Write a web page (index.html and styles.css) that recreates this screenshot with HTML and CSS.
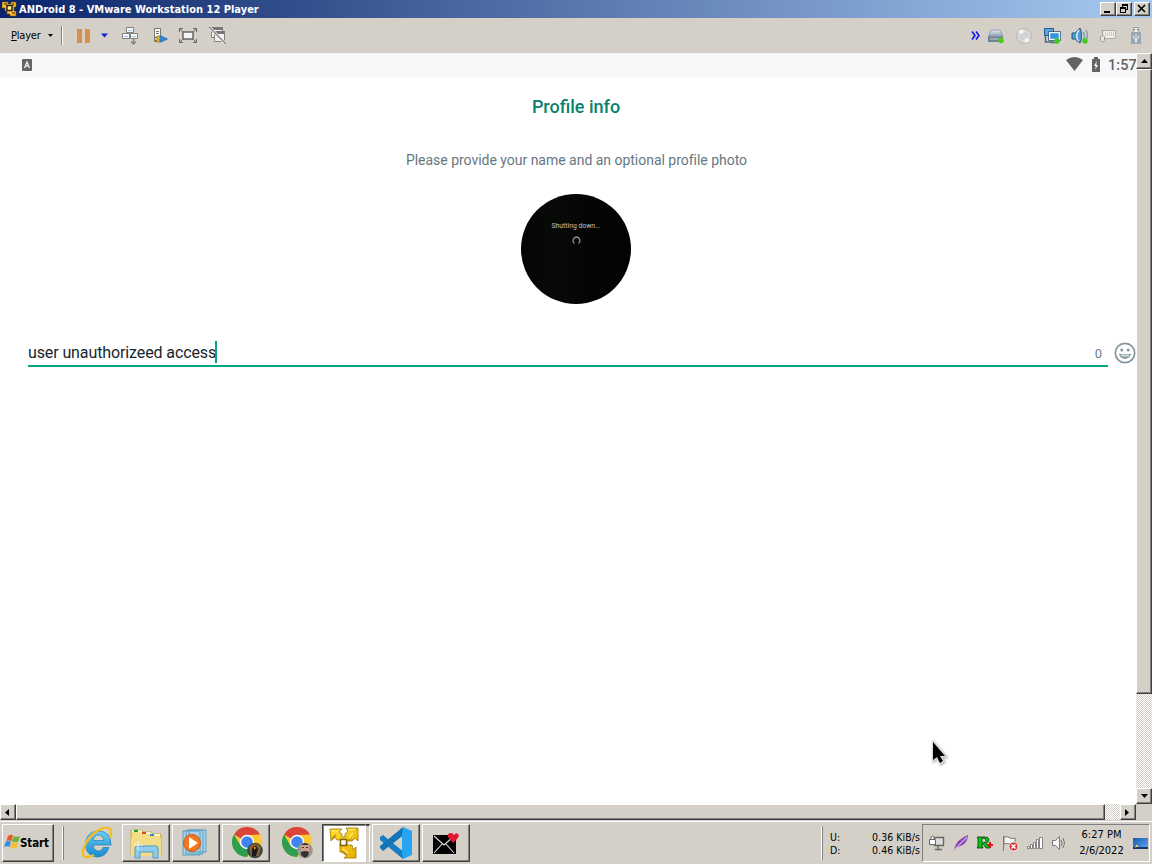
FILE: index.html
```html
<!DOCTYPE html>
<html lang="en">
<head>
<meta charset="utf-8">
<title>ANDroid 8 - VMware Workstation 12 Player</title>
<link rel="stylesheet" href="styles.css">
</head>
<body>
<svg class="defs" aria-hidden="true">
  <defs>
    <linearGradient id="gold" x1="0" y1="0" x2="1" y2="1"><stop offset="0" stop-color="#ffe030"/><stop offset="1" stop-color="#e8ad00"/></linearGradient>
    <linearGradient id="ie" x1="0" y1="0" x2="0" y2="1"><stop offset="0" stop-color="#6ccbf5"/><stop offset="1" stop-color="#168bd0"/></linearGradient>
    <linearGradient id="metal" x1="0" y1="0" x2="0" y2="1"><stop offset="0" stop-color="#e8edf1"/><stop offset="1" stop-color="#8195a5"/></linearGradient>
    <linearGradient id="screen" x1="0" y1="0" x2="1" y2="1"><stop offset="0" stop-color="#1559b5"/><stop offset="1" stop-color="#63a9ee"/></linearGradient>
    <symbol id="chrome" viewBox="0 0 30 30">
      <circle cx="15" cy="15" r="15" fill="#fcc934"/>
      <path d="M15 15 2 7.5A15 15 0 0 1 28 7.5L15 8Z" fill="#d9453a"/>
      <path d="M15 15 8.5 18.5 2 7.5A15 15 0 0 0 15 30L21.500 18.500Z" fill="#2f9e4f"/>
      <circle cx="15" cy="15" r="7.200" fill="#fff"/><circle cx="15" cy="15" r="5.800" fill="#3f83f0"/>
    </symbol>
  </defs>
</svg>
<div class="desktop">
  <header class="titlebar">
    <svg class="app-icon" width="16" height="16" viewBox="0 0 16 16"><path d="M0 1h6v2h3V1h5v5h-2v4h2v5H8v-2H5v-3H3V7H0Z" fill="#ffb92b" stroke="#7a5000" stroke-width=".6"/><path d="M5 4.500h5v5H5Z" fill="#fff0a0" stroke="#2b2412" stroke-width="1.500"/><path d="M2 3h3M11 5V2M10 12h3" stroke="#382800"/></svg>
    <span class="title">ANDroid 8 - VMware Workstation 12 Player</span>
    <div class="window-controls">
      <span class="raised control"><svg width="12" height="10"><path d="M2 7h6v2H2z"/></svg></span>
      <span class="raised control"><svg width="12" height="10"><path d="M4 0h6v6H8V5h1V2H5v1H4zM2 3h6v6H2zm1 2v3h4V5z" fill-rule="evenodd"/></svg></span>
      <span class="raised control close"><svg width="12" height="10"><path d="m2 1 7 7M9 1 2 8" stroke="#000" stroke-width="1.700"/></svg></span>
    </div>
  </header>

  <nav class="toolbar">
    <span class="player-menu"><u>P</u>layer</span>
    <svg class="menu-arrow" width="6" height="4"><path d="M0 0h5L2.500 3z"/></svg>
    <i class="separator"></i>
    <svg class="pause" width="13" height="14"><path d="M0 0h5v14H0zM8 0h5v14H8z" fill="#d5924b"/></svg>
    <svg class="pause-arrow" width="8" height="5"><path d="M0 .5h7L3.500 4.500z" fill="#0726e8"/></svg>
    <svg class="tool t1" width="18" height="18" fill="#f4f8fc" stroke="#808080"><path d="M4.500.5h7v5h-7zM.5 6.500h7v5h-7zM8.500 6.500h7v5h-7z"/><path d="M6 3.500h4M2 9.500h4M10 9.500h4" stroke="#a6c7e5"/><path d="M11.500 12v5m-2.500-2.500 2.500 2.500 2.500-2.500" fill="none" stroke-width="1.400"/></svg>
    <svg class="tool t2" width="16" height="16"><path d="M1.500.5h6v13h-6z" fill="#f4f6f8" stroke="#777"/><path d="M3 3.500h3M3 5.500h3" stroke="#777"/><path d="M2 9.500h3M2 12.500h3" stroke="#9b7417" stroke-width="1.500"/><path d="M4 8h3v6H4z" fill="#e6bc35" stroke="#9b7417" stroke-width=".7"/><path d="M7 8h2l3 2h2v2h-2l-3 2H7z" fill="#3486cc" stroke="#2369a2" stroke-width=".5"/></svg>
    <svg class="tool t3" width="18" height="15" fill="none" stroke="#666"><path d="M4 4h10v7H4z" fill="#f5f5f5" stroke-width="1.500"/><path d="M.5 4V.5H4M14 .5h3.500V4M.5 11v3.500H4M14 14.500h3.500V11M1 1l3 3M17 1l-3 3M1 14l3-3M17 14l-3-3"/></svg>
    <svg class="tool t4" width="18" height="17"><path d="M2.500.5h11v10h-11z" fill="#f7f5f0" stroke="#808080"/><path d="M5.500 4.500h10v10h-10z" fill="#f7f5f0" stroke="#808080"/><path d="M2 0h12v3H2zM5 4h11v3H5z" fill="#777"/><path d="m0 0 17 17" stroke="#eee" stroke-width="3"/><path d="m0 0 17 17" stroke="#777" stroke-width="1.200"/></svg>
    <div class="devices">
      <svg width="9" height="9"><path d="m1 .5 3 4-3 4M5 .5l3 4-3 4" fill="none" stroke="#0812f0" stroke-width="1.500"/></svg>
      <svg width="18" height="16"><path d="M4 2h9l3 7H1z" fill="url(#metal)" stroke="#71818f" stroke-width=".6"/><path d="M1 9h15v5H1z" fill="#708490"/><path d="M3 11h9" stroke="#c5d0d7"/><circle cx="14" cy="12.500" r="2.700" fill="#4eca1d"/></svg>
      <svg width="18" height="18"><circle cx="9" cy="9" r="7.500" fill="#d7d7d5" stroke="#b5b5b3"/><path d="m9 9-6-4a8 8 0 0 1 5-3zm0 0 6 4a8 8 0 0 1-5 3z" fill="#f5f5f3"/><circle cx="9" cy="9" r="2.500" fill="#eee" stroke="#bbb"/><circle cx="9" cy="9" r="1" fill="#bbb"/></svg>
      <svg width="18" height="18"><path d="M1.500 1.500h9v7h-9z" fill="#58a8df" stroke="#245b8c"/><path d="M6.500 5.500h10v7h-10z" fill="#3495df" stroke="#eef5fa" stroke-width="1.500"/><path d="M5.500 4.500h12v9h-12z" fill="none" stroke="#365570" stroke-width=".8"/><path d="M2.500 9v6h8M8 15.500h6" fill="none" stroke="#47677f" stroke-width="1.500"/><circle cx="14" cy="14" r="2.700" fill="#43c818"/></svg>
      <svg width="18" height="18"><path d="M1 6h3l5-5c2 3 2 12 0 15l-5-4H1z" fill="#4f9bcd" stroke="#28577b"/><path d="m8 3c-3 3-3 9 0 11" fill="none" stroke="#dff3ff" stroke-width="1.500"/><path d="M12 5q3 4 0 8M15 3q3 5 0 10" fill="none" stroke="#839eae" stroke-width="1.400"/><circle cx="14" cy="14" r="2.700" fill="#43c818"/></svg>
      <svg width="18" height="16"><path d="M3 2.500h13.500v8H5" fill="#efede8" stroke="#aaa"/><path d="M6 5h9M6 7h9" stroke="#aaa" stroke-dasharray="1 1"/><path d="M1.500 8.500q2-2 4 0v4q-2 3-4 0zM3.500 7V2" fill="#e7e5e0" stroke="#999"/></svg>
      <svg width="12" height="17"><path d="M3.500.5h5v5h-5z" fill="#e6e9eb" stroke="#9ba3aa"/><path d="M4 2.500h1M7 2.500h1" stroke="#666"/><path d="M1 5h10v12H1z" fill="#9aa6b1"/><path d="M6 14V7m0 6L3.500 11V9m2.500 4 2.500-2V9" fill="none" stroke="#e9edf0"/><circle cx="6" cy="14.500" r="1" fill="#fff"/></svg>
    </div>
  </nav>

  <div class="guest-frame">
    <main class="guest">
      <div class="android-status">
        <svg class="keyboard-badge" width="11" height="12"><rect width="10" height="12" rx="1" fill="#666"/><path d="m2.500 9 2.500-6 2.500 6M3.500 7h3" fill="none" stroke="#fff" stroke-width="1.100"/></svg>
        <div class="phone-state">
          <svg width="17" height="14"><path d="M0 3Q8.500-3 17 3L8.500 14z" fill="#636363"/></svg>
          <svg width="8" height="15"><path d="M0 2h2V0h4v2h2v13H0z" fill="#636363"/><path d="M4.700 4 2 9h1.700L3.300 12.500 6 8H4.300z" fill="#fff"/></svg>
          <span class="phone-time">1:57</span>
        </div>
      </div>
      <h1>Profile info</h1>
      <p class="instruction">Please provide your name and an optional profile photo</p>
      <div class="photo"><span>Shutting down...</span><svg width="9" height="9"><path d="M2.500 7.500A3.500 3.500 0 1 1 6.500 7.500" fill="none" stroke="#aaa" stroke-width="1.100"/></svg></div>
      <div class="name-row">
        <div class="name-field"><span class="name-value">user unauthorizeed access</span><i class="caret"></i><span class="counter">0</span></div>
        <svg class="smile" width="22" height="22" viewBox="0 0 22 22"><circle cx="11" cy="11" r="9.700" fill="none" stroke="#84959e" stroke-width="1.700"/><circle cx="7.800" cy="8" r="1.500" fill="#84959e"/><circle cx="14.200" cy="8" r="1.500" fill="#84959e"/><path d="M5 11.500q6 2 12 0c-1 7-11 7-12 0z" fill="#84959e"/><path d="M7 13.600q4 1 8 0" fill="none" stroke="#fff"/></svg>
      </div>
      <svg class="pointer" width="18" height="26" viewBox="0 0 18 26"><path d="M3 2v18l4-3 3 6 3-2-3-5h5z" stroke="#dedede" stroke-width="2.500"/><path d="M3 2v18l4-3 3 6 3-2-3-5h5z"/></svg>
    </main>
    <div class="vscroll">
      <span class="raised scroll-button"><svg width="7" height="4"><path d="M0 4h7L3.500 0z"/></svg></span>
      <span class="raised vthumb"></span><span class="track"></span>
      <span class="raised scroll-button"><svg width="7" height="4"><path d="M0 0h7L3.500 4z"/></svg></span>
    </div>
  </div>
  <div class="hscroll">
    <span class="raised scroll-button"><svg width="4" height="7"><path d="M4 0v7L0 3.500z"/></svg></span>
    <span class="raised hthumb"></span><span class="track"></span>
    <span class="raised scroll-button"><svg width="4" height="7"><path d="M0 0v7l4-3.500z"/></svg></span>
    <span class="corner"></span>
  </div>

  <footer class="taskbar">
    <div class="raised start"><svg width="16" height="16"><path d="M4 2q3-2 5-.5L7.500 7Q5 6 2.500 7z" fill="#e95a25"/><path d="M9.500 2q3 1.500 6.500 0l-1.500 5.500Q11 9 8 7.500z" fill="#72b33d"/><path d="M2 7.500Q5 6.500 7 8L5.500 13q-2-1.500-5.500 0z" fill="#398edc"/><path d="m8 8q3 2 6 .5L12.500 14q-3 1-6-.5z" fill="#f5bd29"/></svg><b>Start</b></div>
    <i class="grip"></i>
    <div class="tasks">
      <div class="task flat ie-task"><svg width="32" height="32" viewBox="0 0 32 32"><path d="M27 20.500Q24 30 15 30C-1 29 0 4 16 4q13 0 13 14H11q1 6 6 6 3 0 4-3.500zM11 13.500h11q-1-5.500-5.500-5.500T11 13.500z" fill="url(#ie)" fill-rule="evenodd" stroke="#1781bb" stroke-width=".7"/><path d="M28 11C34-6 14 0 5 14-2 27 0 34 12 28" fill="none" stroke="#f3bd20" stroke-width="2.500"/></svg></div>
      <div class="task raised"><svg width="34" height="32" viewBox="0 0 34 32"><path d="M2 8V3h10l2 2h8l2 2h8v21H2z" fill="#f4dc83" stroke="#c6a343"/><path d="M3 4h8l2 2h8l2 2h8" fill="none" stroke="#fff5bd" stroke-width="2"/><path d="M5 3h4v2H5z" fill="#139c37"/><path d="M13 5h4v2h-4z" fill="#d94825"/><path d="M21 7h4v2h-4z" fill="#2088d7"/><path d="M2 11h30v18H2z" fill="#f3dc87"/><path d="M6 31V21q0-2 2-2h19q2 0 2 2v10h-5v-6H11v6z" fill="#8dccec" stroke="#4b9dca"/><path d="M9 14v9M5 18h9" stroke="#fff" stroke-width=".8"/></svg></div>
      <div class="task raised"><svg width="30" height="30" viewBox="0 0 30 30"><path d="M8 2h17v22H8zM5 2h17v24H5zM2 3h17v24H2z" fill="#a8d2e8" stroke="#5b9fc2"/><circle cx="11" cy="15" r="8.500" fill="#f2781f" stroke="#cf5810"/><path d="m8 9 9 6-9 6z" fill="#fff"/></svg></div>
      <div class="task raised"><svg class="chrome-icon" width="32" height="32"><use href="#chrome" width="30" height="30"/><circle cx="23" cy="23.500" r="7.800" fill="#344943"/><path d="M17 20q6-7 12 0l-2 9h-8z" fill="#826236"/><path d="M20 22q3-7 6 0l-2 7h-4z" fill="#1b1920"/><path d="m22 19 2 2-2 2z" fill="#ee9526"/></svg></div>
      <div class="task flat"><svg class="chrome-icon" width="32" height="32"><use href="#chrome" width="30" height="30"/><circle cx="23" cy="23.500" r="7.800" fill="#9a9792"/><path d="M19 17q4-3 8 1v8l-4 4-4-4z" fill="#d1a28d"/><path d="M19 25q4-2 8 0l-1 4-3 2-4-3zM19 18q4-4 8 0" fill="#353033"/><path d="M20 20.500h2m2 0h2" stroke="#44302c"/></svg></div>
      <div class="task active"><svg width="30" height="32" viewBox="0 0 30 32"><path d="M1 2h12l-3 3 3 2v3h3V7l3-3-2-3h12v13l-3-3-3 3h-5v4h5l1 5 3-3v11H15l3-3-3-3h-4v-8h2v-4H8l-2-3-4 4z" fill="url(#gold)" stroke="#9c7500" stroke-width=".8"/><path d="M11.500 12.500h6v6h-6z" fill="#fff" stroke="#806200" stroke-width="1.500"/><path d="m3 4 6 0M19 3l7-1M14 22l5 4M20 10l4-4" stroke="#fff17a" stroke-width="1.200"/><path d="m2 12 5-4M12 24l5 4M19 13h5" stroke="#b68600" stroke-width="1.200"/></svg><i class="stack-edge"></i></div>
      <div class="task raised"><svg width="32" height="32" viewBox="0 0 32 32"><path d="m0 10 3-2 22 18-2 6L0 13z" fill="#167fc4"/><path d="m0 21 3 3L25 7l-2-7L0 19z" fill="#1375b7"/><path d="m23 0 9 4v24l-9 4-1-7V8z" fill="#27a5f2"/></svg></div>
      <div class="task raised"><svg width="28" height="24" viewBox="0 0 28 24"><path d="M1 4h23v19H1z"/><path d="m2 5 10 9L22 5M2 22l8-9m4 0 8 9" fill="none" stroke="#ddd" stroke-width="1.100"/><path d="m21 12-5-6q-1-4 3-4 2 0 3 2 2-3 4-1 2 2-1 5z" fill="#e31530"/></svg></div>
    </div>
    <i class="grip net-grip"></i>
    <div class="network"><div><span>U:</span><span class="rate">0.36 KiB/s</span></div><div><span>D:</span><span class="rate">0.46 KiB/s</span></div></div>
    <div class="tray">
      <svg width="16" height="16"><path d="M5.500 2.500h9v8h-9zM9 11v3M6 14.500h7" fill="#ddd" stroke="#666" stroke-width="1.400"/><path d="M.5 4.500h6v5h-6zM2 4V2q1.500-2 3 0v2" fill="#fff" stroke="#666"/></svg>
      <svg width="16" height="16"><path d="M1 14Q4 4 15 0 15 9 5 12z" fill="#8940b9"/><path d="M0 16 14 2" stroke="#ceb0df" stroke-width="1.200"/></svg>
      <svg width="17" height="16"><path d="M0 2h8q4 0 4 3 0 2-3 3l3 4h1v1H9L6 9H5v3h1v1H0v-1h1V3H0zm5 1v5q4 0 4-2.500T5 3z" fill="#05c813" fill-rule="evenodd" stroke="#073b0d" stroke-width=".8"/><path d="M13 7v6m-3-3h6" stroke="#e01616" stroke-width="2"/></svg>
      <svg width="17" height="17"><path d="M1.500 1v15M2 2q4-1 6 1 2 1 5 0v7q-3 1-5-1-3-1-6 0z" fill="#f6f5f3" stroke="#777"/><circle cx="11.500" cy="11.500" r="4.500" fill="#d53333" stroke="#eee"/><path d="m9.500 9.500 4 4m0-4-4 4" stroke="#fff" stroke-width="1.600"/></svg>
      <svg width="17" height="14"><path d="M.5 10.500h2v2h-2zM3.500 8.500h2v4h-2zM6.500 6.500h2v6h-2zM9.500 3.500h2v9h-2zM12.500 1.500h3v11h-3z" fill="#fff" stroke="#777" stroke-width=".9"/></svg>
      <svg width="15" height="16"><path d="M.5 5.500h3l4-4v13l-4-4h-3z" fill="#f8f8f6" stroke="#777"/><path d="M9 5q2 3 0 6M11 3q3 5 0 10" fill="none" stroke="#777"/></svg>
      <div class="clock"><span>6:27 PM</span><span>2/6/2022</span></div>
      <svg class="desktop-icon" width="15" height="13"><path d="M0 1h15v11H0z" fill="url(#screen)"/><path d="M0 10h15v2H0z" fill="#173b67"/><path d="M3 8h2v2H3z" fill="#efcf38"/><path d="M2 9h1v2H2z" fill="#e95b2c"/></svg>
    </div>
  </footer>
</div>
</body>
</html>
```
FILE: styles.css
```css
*{box-sizing:border-box}
body{margin:0;width:1152px;height:864px;overflow:hidden;background:#fff;font-family:"DejaVu Sans Condensed","DejaVu Sans",sans-serif}
svg{display:block;flex-shrink:0}
.defs{position:absolute;width:0;height:0}
.desktop{width:1152px;height:864px;display:flex;flex-direction:column}
.titlebar{height:18px;display:flex;align-items:center;background:linear-gradient(90deg,#0a246a,#a6caf0);padding:0 2px 0 2px;color:#fff;flex-shrink:0}
.title{font-size:11px;font-weight:700;margin-left:1px;letter-spacing:0;white-space:nowrap}
.window-controls{display:flex;margin-left:auto}
.raised{background:#d4d0c8;border:1px solid;border-color:#fff #404040 #404040 #fff;box-shadow:inset -1px -1px #808080}
.control{width:16px;height:14px;padding:1px}
.close{margin-left:2px}
.toolbar{height:35px;background:#d4d0c8;display:flex;align-items:center;padding-left:11px;flex-shrink:0}
.player-menu{font-size:11px;letter-spacing:-.2px;width:34px}
.player-menu u{text-underline-offset:1px}
.menu-arrow{margin-left:3px}
.separator,.grip{width:2px;border-left:1px solid #808080;border-right:1px solid #fff}
.separator{height:19px;margin-left:7px}
.pause{margin-left:14px}
.pause-arrow{margin-left:11px}
.t1{margin-left:13px}
.t2{margin-left:13px}
.t3{margin-left:10px}
.t4{margin-left:12px}
.devices{margin:0 10px 0 auto;display:flex;align-items:center;gap:10px}
.devices svg:nth-child(1){margin-right:-3px}
.devices svg:nth-child(7){margin-left:3px}
.guest-frame{height:751px;display:flex;flex-shrink:0}
.guest{width:1136px;background:#fff;position:relative;display:flex;flex-direction:column;align-items:center;font-family:Roboto,sans-serif;overflow:hidden}
.android-status{height:24px;width:100%;background:#f6f7f9;display:flex;align-items:center;padding-left:22px}
.phone-state{margin-left:auto;display:flex;align-items:center;gap:9px}
.phone-state svg{margin-top:-2px}
.phone-time{font-size:14.5px;font-weight:500;color:#646464;letter-spacing:.1px;margin-left:-1px;width:28px}
h1{margin:18px 0 0 16px;font-size:18px;line-height:24px;font-weight:500;color:#08816d}
.instruction{margin:31px 0 0 17px;font-size:14px;line-height:20px;color:#667781;white-space:nowrap;letter-spacing:-.02px}
.photo{margin:24px 0 0 16px;width:110px;height:110px;border-radius:50%;background:linear-gradient(90deg,#030303,#070a07 25%,#040604 60%,#030303);display:flex;flex-direction:column;align-items:center;padding-top:28px;color:#c4c4c4}
.photo span{font-size:6.8px;line-height:8px;white-space:nowrap}
.photo svg{margin-top:6px}
.name-row{width:100%;padding-left:28px;margin-top:35px;display:flex;gap:6px;align-items:flex-start}
.name-field{width:1080px;height:28px;border-bottom:2px solid #06a58a;display:flex;align-items:center;color:#17252c;font-size:16px;line-height:24px}
.name-value{white-space:nowrap;letter-spacing:-.11px;padding-top:2px}
.caret{height:22px;width:2px;margin-left:-1px;background:#06a58a}
.counter{font-size:13px;color:#6b7d88;margin:3px 6px 0 auto}
.smile{margin-top:3px}
.pointer{position:absolute;left:930px;top:687px;filter:drop-shadow(1px 1px 1px #aaa)}
.vscroll{width:16px;display:flex;flex-direction:column}
.scroll-button{width:16px;height:16px;display:flex;align-items:center;justify-content:center;flex-shrink:0}
.vthumb{height:625px}
.track{flex:1;background:repeating-conic-gradient(#d4d0c8 0 25%,#fff 0 50%) 0 0/2px 2px}
.hscroll{height:16px;display:flex;flex-shrink:0}
.hscroll .scroll-button{padding-right:2px}
.hthumb{width:1089px}
.corner{width:16px;background:#d4d0c8}
.taskbar{height:44px;background:#d4d0c8;border-top:1px solid #d4d0c8;box-shadow:inset 0 1px #fff;display:flex;align-items:flex-start;padding:3px 2px 2px;flex-shrink:0}
.start{width:52px;height:38px;display:flex;align-items:center;gap:0;padding-left:1px;font-size:11.5px}
.start svg{margin-top:-2px}
.start b{letter-spacing:-.1px}
.grip{height:34px;margin:2px 0 0 8px;border-left-color:#fff;border-right-color:#808080}
.tasks{display:flex;gap:2px;margin-left:8px}
.task{width:48px;height:38px;display:flex;align-items:center;justify-content:center}
.ie-task{padding-left:4px}
.task .chrome-icon{margin-left:3px}
.active{background:#fff;border:1px solid #404040;border-right-color:#fff;border-bottom-color:#fff;position:relative;padding-right:5px;box-shadow:inset 1px 1px #808080}
.stack-edge{position:absolute;right:-1px;top:-1px;width:5px;height:38px;background:#d4d0c8;border-left:1px solid #fff;border-right:1px solid #fff;border-top:2px solid #404040}
.net-grip{margin-left:auto}
.network{width:90px;margin-left:7px;padding-top:7px;font-size:10.5px;line-height:13px;white-space:nowrap}
.network div{display:flex;justify-content:space-between}
.rate{letter-spacing:.05px}
.tray{width:228px;height:38px;margin-left:2px;border:1px solid;border-color:#808080 #fff #fff #808080;display:flex;align-items:center;padding-left:6px;gap:8px}
.clock{display:flex;flex-direction:column;align-items:center;font-size:11px;line-height:16px;width:47px;margin-left:3px;white-space:nowrap}
.desktop-icon{margin-left:0}
```
